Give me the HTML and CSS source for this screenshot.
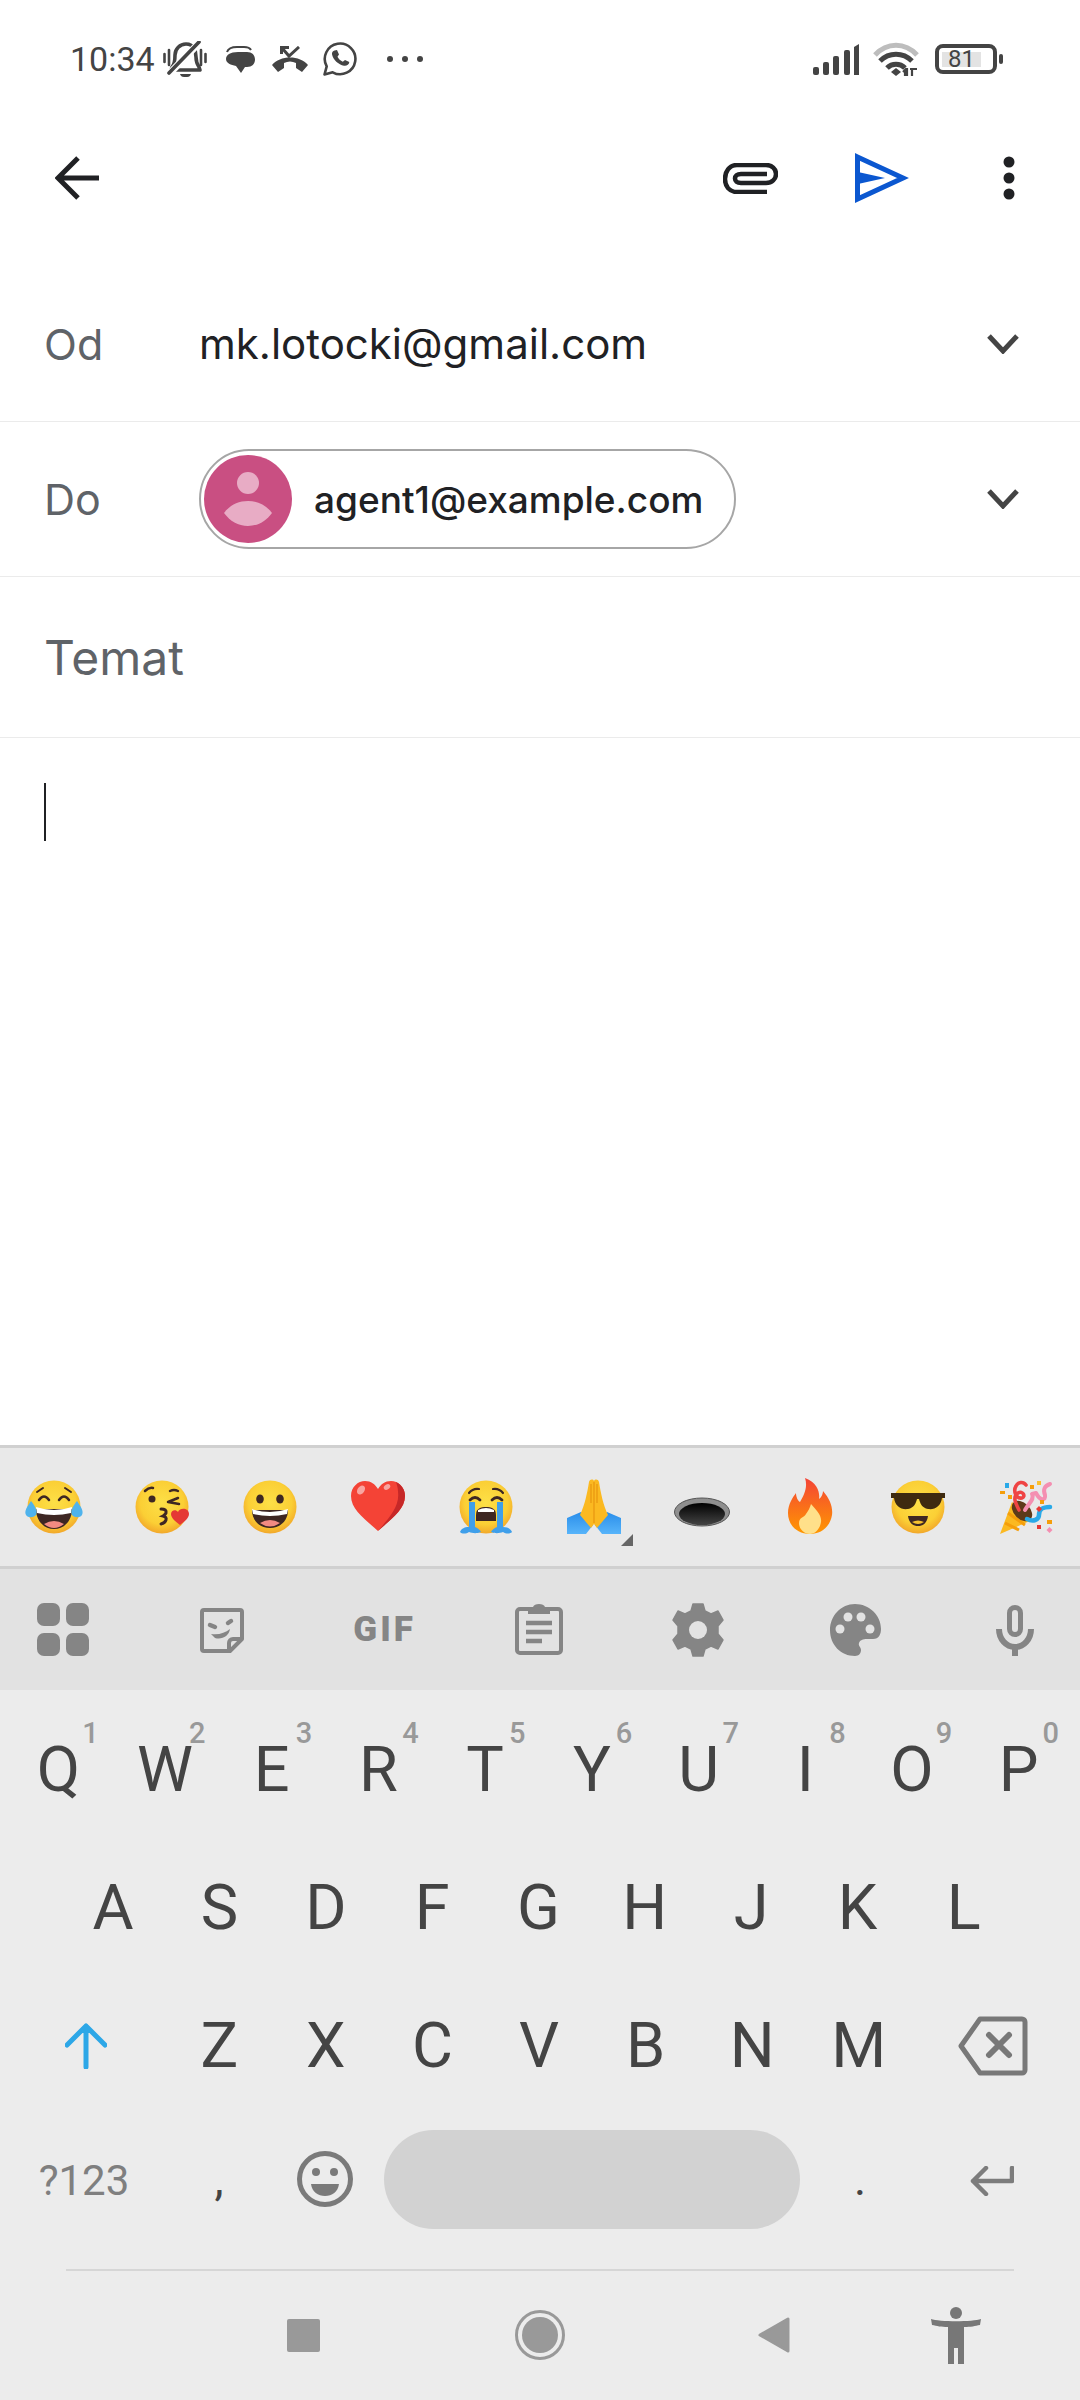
FILE: index.html
```html
<!DOCTYPE html>
<html>

<head>
  <title>Nowa wiadomość</title>
  <link rel="stylesheet" href="styles.css">
</head>

<body>
  <svg class="sprites" width="0" height="0">
    <defs>
      <radialGradient id="faceFill" cx="50%" cy="42%" r="58%">
        <stop offset="0" stop-color="#fde047" />
        <stop offset="0.7" stop-color="#fbcf35" />
        <stop offset="1" stop-color="#f2a82a" />
      </radialGradient>
      <linearGradient id="holeFill" x1="0" y1="0" x2="0" y2="1">
        <stop offset="0" stop-color="#000" />
        <stop offset="1" stop-color="#444" />
      </linearGradient>
      <linearGradient id="flameFill" x1="0" y1="0" x2="0" y2="1">
        <stop offset="0" stop-color="#f44336" />
        <stop offset="1" stop-color="#ff9800" />
      </linearGradient>
      <linearGradient id="sleeveFill" x1="0" y1="0" x2="0" y2="1">
        <stop offset="0" stop-color="#2a8eea" />
        <stop offset="1" stop-color="#57b4fa" />
      </linearGradient>
      <symbol id="face" viewBox="0 0 60 60">
        <circle cx="30" cy="30" r="26.5" fill="url(#faceFill)" />
      </symbol>
    </defs>
  </svg>

  <!-- pasek stanu -->
  <div class="status-bar">
    <div class="status-left">
      <span class="time">10:34</span>
      <svg class="st-bell" width="44" height="36" viewBox="0 0 44 36">
        <path d="M9 26 c3-3 3-8 3-12 c0-6 5-11 11-11 c4 0 7 2 9 5 l1 8 c0 4 1 7 3 10 l1 3 H8z" fill="none" stroke="#444" stroke-width="3.6" stroke-linejoin="round" />
        <path d="M37 1 L6 33" stroke="#fff" stroke-width="7" />
        <path d="M36 1 L6 32" stroke="#444" stroke-width="3.6" stroke-linecap="round" />
        <path d="M17 33 h11 c-1 3-3 3-5.500 3 s-4.500 0-5.500-3z" fill="#444" />
        <path d="M1.500 13 v8 M6 9 v15 M38 9 v15 M42.500 13 v8" stroke="#444" stroke-width="2.600" stroke-linecap="round" />
      </svg>
      <svg class="st-msg" width="29" height="27" viewBox="0 0 29 27">
        <path d="M12 6 h9 c5 0 8 3 8 7.500 s-3 7.500-8 7.500 h-2 l-4 6 l-5-7 c-5-1-10-3-10-7 c0-4 4-7 12-7z" fill="#444" />
        <path d="M1 6 c1-3 5-5 10-5 h7 c3 0 6 1 7 3" fill="none" stroke="#444" stroke-width="2" />
      </svg>
      <svg class="st-call" width="36" height="26" viewBox="0 0 36 26">
        <path d="M0 19 C8 9 28 9 36 19 L30 26 L24 22 V17 C20 15 16 15 12 17 V22 L6 26z" fill="#444" />
        <path d="M9.500 8 V1.500 H17 M10 2 L17 10 L27 1" fill="none" stroke="#444" stroke-width="3" />
      </svg>
      <svg class="st-whatsapp" width="34" height="34" viewBox="0 0 34 34">
        <path d="M1.500 32.500 l2.200-8.200 a15.300 15.300 0 1 1 6 6z" fill="none" stroke="#444" stroke-width="2.600" stroke-linejoin="round" />
        <path d="M11.500 8.500 l2.500-0.500 l2 4.500 l-1.500 2.200 c1 2 3 4 5.300 5 l2.200-1.800 l4.300 2.200 c-0.300 3-3 4-5.300 3.600 c-5.500-1-11-6-12-11.500 c-0.300-1.800 1-3.400 2.500-3.700z" fill="#444" />
      </svg>
      <span class="st-dots"><i></i><i></i><i></i></span>
    </div>
    <div class="status-right">
      <svg width="47" height="31" viewBox="0 0 47 31">
        <rect x="0" y="23" width="6" height="8" rx="2" fill="#444" />
        <rect x="10" y="18" width="6" height="13" rx="2" fill="#444" />
        <rect x="20" y="12" width="6" height="19" rx="2" fill="#444" />
        <rect x="31" y="6" width="6" height="25" rx="2" fill="#444" />
        <path d="M41 31 V3 l5-3 V31z" fill="#444" />
      </svg>
      <svg class="st-wifi" width="46" height="35" viewBox="0 0 46 35">
        <path d="M2 13 C14 0 32 0 44 13" fill="none" stroke="#bdbdbd" stroke-width="5" />
        <path d="M7 19 C16 10 30 10 39 19" fill="none" stroke="#444" stroke-width="5" />
        <path d="M14 26 C19 21 27 21 32 26" fill="none" stroke="#444" stroke-width="5" />
        <path d="M18 30 l5-4 l5 4 l-5 4z" fill="#444" />
        <path d="M34 26 v8 M30 30 l2-2 v6 M39 27 v7 M37 27 h7" fill="none" stroke="#444" stroke-width="2.200" />
      </svg>
      <div class="battery">
        <div class="battery-body"><span class="battery-level">81</span></div>
        <div class="battery-nub"></div>
      </div>
    </div>
  </div>

  <!-- pasek narzędzi -->
  <div class="toolbar">
    <svg class="tb-back" width="44" height="44" viewBox="0 0 44 44">
      <path d="M44 22 H4 M23 2 L3 22 L23 42" fill="none" stroke="#202124" stroke-width="5" />
    </svg>
    <svg class="tb-clip" width="55" height="31" viewBox="0 0 55 31">
      <path d="M44 29 H14 C6 29 2 23 2 16 S6 2 14 2 H43 C49 2 53 6 53 11 S49 20 43 20 H18 C14 20 12 18 12 15.500 S14 11 18 11 H44" fill="none" stroke="#202124" stroke-width="4.500" />
    </svg>
    <svg class="tb-send" width="54" height="50" viewBox="0 0 54 50">
      <path d="M2.500 4 L48 25 L2.500 46z" fill="none" stroke="#0b57d0" stroke-width="5" />
      <path d="M3 19 L30 25 L3 31z" fill="#0b57d0" />
    </svg>
    <svg class="tb-menu" width="12" height="44" viewBox="0 0 12 44">
      <circle cx="6" cy="6" r="5.500" fill="#202124" />
      <circle cx="6" cy="22" r="5.500" fill="#202124" />
      <circle cx="6" cy="38" r="5.500" fill="#202124" />
    </svg>
  </div>

  <!-- nagłówki wiadomości -->
  <div class="field field-from">
    <span class="field-label">Od</span>
    <span class="field-value">mk.lotocki@gmail.com</span>
    <svg class="chevron" width="32" height="20" viewBox="0 0 32 20">
      <path d="M2 2 L16 17 L30 2" fill="none" stroke="#444" stroke-width="5" />
    </svg>
  </div>
  <div class="field field-to">
    <span class="field-label">Do</span>
    <div class="chip">
      <svg class="avatar" width="88" height="88" viewBox="0 0 88 88">
        <circle cx="44" cy="44" r="44" fill="#c94f82" />
        <circle cx="44" cy="28" r="11" fill="#e8acc5" />
        <path d="M20 58 C26 50 34 46 44 46 S62 50 68 58 C62 66 54 71 44 71 S26 66 20 58z" fill="#e8acc5" />
      </svg>
      <span class="chip-text">agent1@example.com</span>
    </div>
    <svg class="chevron" width="32" height="20" viewBox="0 0 32 20">
      <path d="M2 2 L16 17 L30 2" fill="none" stroke="#444" stroke-width="5" />
    </svg>
  </div>
  <div class="field field-subject">
    <span class="subject-label">Temat</span>
  </div>
  <div class="compose-body">
    <div class="cursor"></div>
  </div>

  <!-- klawiatura -->
  <div class="keyboard">
    <div class="emoji-strip">
      <span class="emoji">
        <svg width="60" height="60" viewBox="0 0 60 60">
          <use href="#face" width="60" height="60" />
          <path d="M15 23 q5-7 10 0 M35 23 q5-7 10 0" fill="none" stroke="#3e2723" stroke-width="2.500" stroke-linecap="round" />
          <path d="M13 15 l6-4 M47 15 l-6-4" stroke="#3e2723" stroke-width="2" stroke-linecap="round" />
          <path d="M12 32 H48 C48 44 40 52 30 52 S12 44 12 32z" fill="#3e2723" />
          <path d="M12 30 Q30 36 48 30 L47 36 Q30 40 13 36z" fill="#fff" />
          <path d="M20 47 q10-6 20 0 q-10 8-20 0z" fill="#f28b82" />
          <path d="M7 24 C3 30 0 34 2 38 c2 3 7 3 10 0 c2-4-1-9-5-14z M53 24 C57 30 60 34 58 38 c-2 3-7 3-10 0 c-2-4 1-9 5-14z" fill="#4fb3ec" />
        </svg>
      </span>
      <span class="emoji">
        <svg width="60" height="60" viewBox="0 0 60 60">
          <use href="#face" width="60" height="60" />
          <circle cx="20" cy="22" r="3.500" fill="#3e2723" />
          <path d="M13 14 q4-4 8-3 M36 25 l10-4 M36 25 l11 2 M38 14 q4-2 8 0" fill="none" stroke="#3e2723" stroke-width="2.500" stroke-linecap="round" />
          <path d="M29 32 q6 0 5 4 q-1 2-3 3 q4 1 3 4 q-1 3-5 4" fill="none" stroke="#3e2723" stroke-width="3" stroke-linecap="round" />
          <path d="M48 48 C44 45 39 41 39 37 c0-4 5-5 7-2 c2-5 11-4 11 2 c0 4-5 8-9 11z" fill="#e53935" />
        </svg>
      </span>
      <span class="emoji">
        <svg width="60" height="60" viewBox="0 0 60 60">
          <use href="#face" width="60" height="60" />
          <ellipse cx="20" cy="22" rx="3.800" ry="4.600" fill="#3e2723" />
          <ellipse cx="40" cy="22" rx="3.800" ry="4.600" fill="#3e2723" />
          <path d="M12 33 H48 C48 44 40 51 30 51 S12 44 12 33z" fill="#3e2723" />
          <path d="M12 32 Q30 38 48 32 L47 37 Q30 41 13 37z" fill="#fff" />
          <path d="M20 46 q10-6 20 0 q-10 7-20 0z" fill="#f28b82" />
        </svg>
      </span>
      <span class="emoji">
        <svg width="60" height="60" viewBox="0 0 60 60">
          <path d="M30 54 C18 43 3 33 3 19 C3 10 10 4 17 4 C23 4 27 7 30 12 C33 7 37 4 43 4 C50 4 57 10 57 19 C57 33 42 43 30 54z" fill="#f44336" />
          <path d="M48 5 C54 8 57 13 57 19 C57 33 42 43 30 54 C40 42 52 30 50 15 C50 11 49 8 48 5z" fill="#c62828" />
          <ellipse cx="13" cy="13" rx="3.500" ry="5" transform="rotate(35 13 13)" fill="#f8a5a0" />
          <ellipse cx="39" cy="10" rx="3.500" ry="2.500" transform="rotate(-35 39 10)" fill="#f8a5a0" />
        </svg>
      </span>
      <span class="emoji">
        <svg width="60" height="60" viewBox="0 0 60 60">
          <use href="#face" width="60" height="60" />
          <path d="M13 16 q4-5 10-4 M37 12 q6-1 10 4" fill="none" stroke="#3e2723" stroke-width="2.200" stroke-linecap="round" />
          <path d="M14 23 q5-5 10 0 M36 23 q5-5 10 0" fill="none" stroke="#3e2723" stroke-width="2.800" stroke-linecap="round" />
          <path d="M20 44 V38 C20 31 25 30 30 30 S40 31 40 38 V44z" fill="#3e2723" />
          <path d="M22 33 q8-4 16 0 v2 H22z" fill="#fff" />
          <path d="M13 25 h6 V50 c3 1 5 3 6 5 c-5 2-9 1-12 0 c-3 2-7 2-9 0 c1-3 4-5 9-5z M41 25 h6 V50 c5 0 8 2 9 5 c-2 2-6 2-9 0 c-3 1-7 2-12 0 c1-2 3-4 6-5z" fill="#3f9fea" />
        </svg>
      </span>
      <span class="emoji emoji-more">
        <svg width="60" height="60" viewBox="0 0 60 60">
          <path d="M3 41 L17 35 L29 48 L22 57 H3z M57 41 L43 35 L31 48 L38 57 H57z" fill="url(#sleeveFill)" />
          <path d="M25 5 C26 2 29 2 30 4 C31 2 34 2 35 5 C37 17 39 27 44 38 L33 51 L30 47 L27 51 L16 38 C21 27 23 17 25 5z" fill="#fbb921" />
          <path d="M30 5 V46 M27 7 V26 M33 7 V26" stroke="#e8960f" stroke-width="1.200" />
        </svg>
        <svg class="emoji-corner" width="12" height="12" viewBox="0 0 12 12">
          <path d="M12 0 V12 H0z" fill="#666" />
        </svg>
      </span>
      <span class="emoji">
        <svg width="60" height="60" viewBox="0 0 60 60">
          <ellipse cx="30" cy="35" rx="27.500" ry="14" fill="#8f8f8f" />
          <ellipse cx="30" cy="35" rx="27.500" ry="14" fill="none" stroke="#555" stroke-width="1" />
          <ellipse cx="30" cy="37" rx="23" ry="11" fill="url(#holeFill)" />
        </svg>
      </span>
      <span class="emoji">
        <svg width="60" height="60" viewBox="0 0 60 60">
          <path d="M25 1 C38 6 40 16 39 22 C42 20 43 16 43 14 C50 22 53 30 52 38 C50 50 41 57 30 57 C17 57 8 48 8 36 C8 27 13 20 16 16 C16 20 18 24 20 25 C24 18 28 10 25 1z" fill="url(#flameFill)" />
          <path d="M31 27 C36 33 42 38 41 45 C40 52 35 57 30 57 C24 57 19 52 19 46 C19 40 24 41 26 37 C28 34 30 31 31 27z" fill="#ffe08a" />
        </svg>
      </span>
      <span class="emoji">
        <svg width="60" height="60" viewBox="0 0 60 60">
          <use href="#face" width="60" height="60" />
          <path d="M3 16 H57 V21 H54 C53 29 47 33 40 32 C34 31 32 26 31 22 H29 C28 26 26 31 20 32 C13 33 7 29 6 21 H3z" fill="#3e2a10" />
          <path d="M20 39 H40 C39 46 35 49 30 49 S21 46 20 39z" fill="#3e2723" />
          <path d="M24 45 q6-3 12 0 q-6 4-12 0z" fill="#f6c12f" />
        </svg>
      </span>
      <span class="emoji">
        <svg width="60" height="60" viewBox="0 0 60 60">
          <path d="M4 57 L16 25 L36 43z" fill="#fbb921" />
          <path d="M9 46 L23 53 M12 36 L29 48" stroke="#f59e0b" stroke-width="3" />
          <ellipse cx="26" cy="34" rx="8" ry="12" transform="rotate(-45 26 34)" fill="#5d3a1a" />
          <path d="M23 33 C20 27 16 20 22 16 C27 13 30 20 26 21 C20 22 17 14 20 9 C22 5 27 4 30 8" fill="none" stroke="#ef4444" stroke-width="3.600" stroke-linecap="round" />
          <path d="M29 33 C33 26 39 22 36 17 L40 16 C44 24 50 24 49 18 C47 13 48 9 54 7" fill="none" stroke="#f48fb1" stroke-width="4" stroke-linecap="round" stroke-linejoin="round" />
          <path d="M31 42 C37 45 43 43 43 38 C43 31 48 30 54 30" fill="none" stroke="#29a9e8" stroke-width="4.500" stroke-linecap="round" />
          <rect x="9" y="6" width="4" height="5" fill="#29a9e8" />
          <rect x="4" y="14" width="5" height="3" fill="#f59e0b" />
          <rect x="12" y="18" width="4" height="4" fill="#f59e0b" />
          <rect x="34" y="8" width="4" height="4" fill="#f59e0b" />
          <rect x="41" y="4" width="4" height="4" fill="#fbc02d" />
          <rect x="44" y="23" width="4" height="4" fill="#f59e0b" />
          <path d="M43 29 l3 3 l-3 3 l-3-3z" fill="#e53935" />
          <rect x="41" y="48" width="4" height="4" fill="#e53935" />
          <rect x="51" y="43" width="5" height="4" fill="#f59e0b" />
          <path d="M53.500 50 l3 3 l-3 3 l-3-3z" fill="#f48fb1" />
        </svg>
      </span>
    </div>

    <div class="kb-tools">
      <svg width="54" height="54" viewBox="0 0 54 54">
        <rect x="1" y="0" width="23" height="23" rx="7" fill="#858585" />
        <rect x="30" y="0" width="23" height="23" rx="7" fill="#858585" />
        <rect x="1" y="30" width="23" height="23" rx="7" fill="#858585" />
        <rect x="30" y="30" width="23" height="23" rx="7" fill="#858585" />
      </svg>
      <svg width="54" height="54" viewBox="0 0 54 54">
        <path d="M9 7 H45 a2 2 0 0 1 2 2 V36 L35 48 H9 a2 2 0 0 1-2-2 V9 a2 2 0 0 1 2-2z" fill="none" stroke="#858585" stroke-width="4" stroke-linejoin="round" />
        <path d="M34 48 V40 a4 4 0 0 1 4-4 H47" fill="none" stroke="#858585" stroke-width="4" />
        <path d="M15 22 l5 2 M33 20 l3-2" stroke="#858585" stroke-width="4.500" stroke-linecap="round" />
        <path d="M16 31 C24 32 30 30 35 26 C34 33 27 37 20 35z" fill="#858585" />
      </svg>
      <span class="gif-text">GIF</span>
      <svg width="54" height="54" viewBox="0 0 54 54">
        <path d="M16 6 H8 a3 3 0 0 0-3 3 V47 a3 3 0 0 0 3 3 H46 a3 3 0 0 0 3-3 V9 a3 3 0 0 0-3-3 H38" fill="none" stroke="#858585" stroke-width="4" />
        <path d="M16 4 H21 C22 0 32 0 33 4 H38 V11 H16z" fill="#858585" />
        <path d="M14 20 H40 M14 29 H40 M14 38 H30" stroke="#858585" stroke-width="4.500" />
      </svg>
      <svg width="54" height="54" viewBox="0 0 54 54">
        <path d="M22 1 H32 L34 8 L40 11 L47 8 L52 17 L47 23 V31 L52 37 L47 46 L40 43 L34 46 L32 53 H22 L20 46 L14 43 L7 46 L2 37 L7 31 V23 L2 17 L7 8 L14 11 L20 8z" fill="#858585" stroke="#858585" stroke-width="1.500" stroke-linejoin="round" />
        <circle cx="27" cy="27" r="9" fill="#e2e2e2" />
      </svg>
      <svg width="54" height="54" viewBox="0 0 54 54">
        <path d="M26 1 C12 1 1 13 1 27 C1 42 12 53 26 53 C30 53 32 50 32 47 C32 44 29 43 30 40 C31 37 34 36 38 36 H44 C50 36 52 31 52 26 C52 12 40 1 26 1z" fill="#858585" />
        <circle cx="11" cy="26" r="4.500" fill="#e2e2e2" />
        <circle cx="19" cy="14" r="4.500" fill="#e2e2e2" />
        <circle cx="32" cy="14" r="4.500" fill="#e2e2e2" />
        <circle cx="41" cy="26" r="4.500" fill="#e2e2e2" />
      </svg>
      <svg width="54" height="54" viewBox="0 0 54 54">
        <rect x="21.500" y="4.500" width="11" height="27" rx="5.500" fill="none" stroke="#858585" stroke-width="5" />
        <path d="M11 26 C11 36 18 44 27 44 S43 36 43 26" fill="none" stroke="#858585" stroke-width="6" />
        <path d="M27 44 V53" stroke="#858585" stroke-width="6" />
      </svg>
    </div>

    <div class="key-row row-top">
      <span class="key">Q<sup class="hint">1</sup></span>
      <span class="key">W<sup class="hint">2</sup></span>
      <span class="key">E<sup class="hint">3</sup></span>
      <span class="key">R<sup class="hint">4</sup></span>
      <span class="key">T<sup class="hint">5</sup></span>
      <span class="key">Y<sup class="hint">6</sup></span>
      <span class="key">U<sup class="hint">7</sup></span>
      <span class="key">I<sup class="hint">8</sup></span>
      <span class="key">O<sup class="hint">9</sup></span>
      <span class="key">P<sup class="hint">0</sup></span>
    </div>
    <div class="key-row row-home">
      <span class="key">A</span>
      <span class="key">S</span>
      <span class="key">D</span>
      <span class="key">F</span>
      <span class="key">G</span>
      <span class="key">H</span>
      <span class="key">J</span>
      <span class="key">K</span>
      <span class="key">L</span>
    </div>
    <div class="key-row row-shift">
      <span class="key-shift">
        <svg width="42" height="46" viewBox="0 0 42 46">
          <path d="M21 44 V3 M2 22 L21 3 L40 22" fill="none" stroke="#2da7e7" stroke-width="5" stroke-linecap="round" stroke-linejoin="round" />
        </svg>
      </span>
      <span class="key">Z</span>
      <span class="key">X</span>
      <span class="key">C</span>
      <span class="key">V</span>
      <span class="key">B</span>
      <span class="key">N</span>
      <span class="key">M</span>
      <span class="key-delete">
        <svg width="70" height="60" viewBox="0 0 70 60">
          <path d="M22 3 H64 a3 3 0 0 1 3 3 V54 a3 3 0 0 1-3 3 H22 L3 30z" fill="none" stroke="#787878" stroke-width="5" stroke-linejoin="round" />
          <path d="M31 19 L51 39 M51 19 L31 39" stroke="#787878" stroke-width="6" stroke-linecap="round" />
        </svg>
      </span>
    </div>
    <div class="key-row row-bottom">
      <span class="key-symbols">?123</span>
      <span class="key-comma">,</span>
      <span class="key-emoji">
        <svg width="56" height="56" viewBox="0 0 56 56">
          <circle cx="28" cy="28" r="25.500" fill="none" stroke="#7a7a7a" stroke-width="5" />
          <circle cx="19" cy="21" r="4" fill="#7a7a7a" />
          <circle cx="37" cy="21" r="4" fill="#7a7a7a" />
          <path d="M14 33 H42 C41 41 35 45 28 45 S15 41 14 33z" fill="#7a7a7a" />
        </svg>
      </span>
      <div class="spacebar"></div>
      <span class="key-period">.</span>
      <span class="key-enter">
        <svg width="44" height="30" viewBox="0 0 44 30">
          <path d="M42 2 V15 H3 M16 2 L3 15 L16 28" fill="none" stroke="#7c7c7c" stroke-width="4.500" stroke-linecap="round" stroke-linejoin="round" />
        </svg>
      </span>
    </div>

    <div class="nav-rule"></div>
    <div class="nav-bar">
      <div class="nav-square"></div>
      <svg class="nav-home" width="50" height="50" viewBox="0 0 50 50">
        <circle cx="25" cy="25" r="23.500" fill="none" stroke="#999" stroke-width="3" />
        <circle cx="25" cy="25" r="18" fill="#999" />
      </svg>
      <svg class="nav-back" width="33" height="38" viewBox="0 0 33 38">
        <path d="M31 3 V35 L3 19z" fill="#999" stroke="#999" stroke-width="3" stroke-linejoin="round" />
      </svg>
      <svg class="nav-access" width="50" height="57" viewBox="0 0 50 57">
        <circle cx="25" cy="6" r="6" fill="#777" />
        <path d="M0 12 C8 15 42 15 50 12 L49 18 C44 19 40 20 33 20 V57 H27 V41 H23 V57 H17 V20 C10 20 6 19 1 18z" fill="#777" />
      </svg>
    </div>
  </div>
</body>

</html>
```

FILE: styles.css
```css
* {
  box-sizing: border-box;
}

body {
  margin: 0;
  width: 1080px;
  height: 2400px;
  overflow: hidden;
  display: flex;
  flex-direction: column;
  background-color: #fff;
  font-family: Roboto, "Noto Sans", sans-serif;
}

svg {
  display: block;
  flex-shrink: 0;
}

.sprites {
  position: absolute;
}

/* status bar */
.status-bar {
  height: 118px;
  padding: 0 77px 0 70px;
  display: flex;
  justify-content: space-between;
  align-items: center;
}

.status-left,
.status-right {
  display: flex;
  align-items: center;
}

.time {
  font-size: 34px;
  color: #444;
  margin-right: 8px;
}

.st-msg {
  margin-left: 19px;
}

.st-call {
  margin-left: 17px;
}

.st-whatsapp {
  margin-left: 15px;
}

.st-dots {
  display: flex;
  gap: 9px;
  margin-left: 30px;
}

.st-dots i {
  width: 6px;
  height: 6px;
  border-radius: 50%;
  background-color: #444;
}

.st-wifi {
  margin-left: 13px;
}

.battery {
  display: flex;
  align-items: center;
  margin-left: 16px;
}

.battery-body {
  width: 62px;
  height: 30px;
  padding: 4px 12px 3px 3px;
  border: 4px solid #444;
  border-radius: 8px;
  display: flex;
}

.battery-level {
  flex: 1;
  background-color: #e3e3e3;
  color: #444;
  font-size: 24px;
  line-height: 15px;
  text-align: center;
}

.battery-nub {
  width: 4px;
  height: 10px;
  margin-left: 2px;
  border-radius: 2px;
  background-color: #444;
}

/* toolbar */
.toolbar {
  height: 120px;
  padding: 0 65px 0 55px;
  display: flex;
  align-items: center;
}

.tb-clip {
  margin-left: auto;
}

.tb-send {
  margin-left: 77px;
}

.tb-menu {
  margin-left: 94px;
}

/* fields */
.field {
  padding: 0 61px 0 44px;
  display: flex;
  align-items: center;
  border-bottom: 1px solid #ebebeb;
  font-family: Inter, Roboto, sans-serif;
}

.field-from {
  height: 156px;
  margin-top: 28px;
}

.field-to {
  height: 155px;
}

.field-subject {
  height: 161px;
}

.field-label {
  width: 155px;
  font-size: 43px;
  color: #5f6368;
}

.field-value {
  font-size: 42px;
  color: #202124;
}

.chevron {
  margin-left: auto;
}

.chip {
  width: 537px;
  height: 100px;
  padding-left: 3px;
  border: 2px solid #a6a6a6;
  border-radius: 50px;
  display: flex;
  align-items: center;
  gap: 22px;
}

.chip-text {
  font-size: 37px;
  font-weight: 500;
  color: #202124;
}

.subject-label {
  font-size: 48px;
  color: #5f6368;
}

.compose-body {
  flex: 1;
  padding: 45px 0 0 44px;
}

.cursor {
  width: 2px;
  height: 58px;
  background-color: #202124;
}

/* keyboard */
.keyboard {
  height: 955px;
  background-color: #ececec;
}

.emoji-strip {
  height: 124px;
  display: flex;
  align-items: center;
  background-color: #e9e9e9;
  border-top: 3px solid #d0d0d0;
  border-bottom: 3px solid #d0d0d0;
}

.emoji {
  position: relative;
  width: 108px;
  display: flex;
  justify-content: center;
}

.emoji-corner {
  position: absolute;
  right: 15px;
  bottom: -9px;
}

.kb-tools {
  height: 121px;
  padding: 0 38px 0 36px;
  display: flex;
  justify-content: space-between;
  align-items: center;
  background-color: #e2e2e2;
}

.gif-text {
  width: 54px;
  text-align: center;
  font-size: 35px;
  font-weight: 900;
  letter-spacing: 3px;
  color: #858585;
}

.key-row {
  height: 138px;
  display: flex;
  align-items: center;
}

.row-top {
  margin-top: 11px;
  padding: 0 8px 0 5px;
}

.row-home {
  padding: 0 63px 0 60px;
}

.key {
  position: relative;
  flex: 1;
  text-align: center;
  font-size: 63px;
  line-height: 76px;
  color: #444;
}

.key-shift {
  flex: 0 0 166px;
  padding-left: 6px;
  display: flex;
  justify-content: center;
}

.key-delete {
  flex: 0 0 161px;
  margin-right: 7px;
  display: flex;
  justify-content: center;
}

.hint {
  position: absolute;
  top: -14px;
  right: 13px;
  font-size: 29px;
  font-weight: 500;
  line-height: 30px;
  color: #999;
}

.row-bottom {
  height: 128px;
}

.key-symbols {
  width: 166px;
  margin-top: 3px;
  padding-left: 2px;
  text-align: center;
  font-size: 42px;
  color: #7f7f7f;
}

.key-comma {
  width: 106px;
  text-align: center;
  font-size: 46px;
  color: #444;
}

.key-emoji {
  width: 112px;
  padding-right: 6px;
  display: flex;
  justify-content: center;
}

.spacebar {
  width: 416px;
  height: 99px;
  border-radius: 50px;
  background-color: #d2d2d2;
}

.key-period {
  width: 120px;
  text-align: center;
  font-size: 46px;
  color: #444;
}

.key-enter {
  flex: 1;
  margin-top: 3px;
  padding-right: 16px;
  display: flex;
  justify-content: center;
}

.nav-rule {
  height: 2px;
  margin: 26px 66px 0;
  background-color: #d6d6d6;
}

.nav-bar {
  height: 128px;
  padding-left: 287px;
  display: flex;
  align-items: center;
}

.nav-square {
  width: 33px;
  height: 33px;
  border-radius: 2px;
  background-color: #999;
}

.nav-home {
  margin-left: 195px;
}

.nav-back {
  margin-left: 192px;
}

.nav-access {
  margin-left: 141px;
}
```
